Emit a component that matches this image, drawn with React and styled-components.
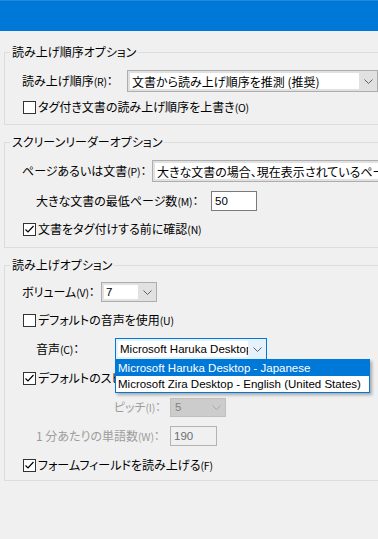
import styled, { createGlobalStyle } from "styled-components";

const GlobalStyle = createGlobalStyle`
  html, body {
    margin: 0;
    padding: 0;
    background: #f0f0f0;
  }
  body {
    font-family: "Noto Sans CJK JP", sans-serif;
    font-feature-settings: "palt";
    font-size: 12px;
    color: #000;
    overflow: hidden;
  }
`;

const latin = `"Liberation Sans", "Noto Sans CJK JP", sans-serif`;

const Page = styled.div`
  width: 378px;
  height: 539px;
  overflow: hidden;
  background: #f0f0f0;
`;

const TitleBar = styled.div`
  height: 31px;
  background: #0078d7;
  border-top: 1px solid #1f8ae0;
  box-sizing: border-box;
`;

const Group = styled.fieldset`
  width: 440px;
  margin: ${(p) => p.$top}px 0 0 4px;
  padding: 0;
  border: 1px solid #dcdcdc;
  box-sizing: border-box;
`;

const Legend = styled.legend`
  margin-left: 5px;
  padding: 0 2px;
  line-height: 16px;
  height: 16px;
`;

const Body = styled.div`
  padding: ${(p) => p.$pt}px 0 ${(p) => p.$pb}px 17px;
`;

const Row = styled.div`
  position: relative;
  display: flex;
  align-items: center;
  height: 22px;
  margin-top: ${(p) => p.$mt || 0}px;
  padding-left: ${(p) => (p.$indent ? 14 : 0)}px;
  white-space: nowrap;
`;

const Label = styled.div`
  width: ${(p) => p.$w}px;
  flex-shrink: 0;
  text-align: ${(p) => (p.$right ? "right" : "left")};
  padding-right: ${(p) => (p.$right ? 9 : 0)}px;
  box-sizing: border-box;
  color: ${(p) => (p.$disabled ? "#9d9d9d" : "#000")};
  line-height: 16px;
`;

const Key = styled.span`
  font-size: 10.5px;
  letter-spacing: -0.2px;
`;

const Combo = styled.div`
  position: relative;
  display: flex;
  width: ${(p) => p.$w}px;
  height: ${(p) => p.$h}px;
  box-sizing: border-box;
  flex-shrink: 0;
  border: 1px solid
    ${(p) => (p.$focused ? "#0078d7" : p.$disabled ? "#bfbfbf" : "#adadad")};
  background: ${(p) =>
    p.$focused ? "#e5f1fb" : p.$disabled ? "#cccccc" : "#e1e1e1"};
  padding: 2px 0 2px 2px;
`;

const Field = styled.div`
  flex: 1;
  background: ${(p) => (p.$disabled ? "transparent" : "#fff")};
  color: ${(p) => (p.$disabled ? "#838383" : "#000")};
  padding-left: 2px;
  display: flex;
  align-items: center;
  overflow: hidden;
  font-family: ${(p) => (p.$latin ? latin : "inherit")};
  font-size: ${(p) => (p.$latin ? "11.5px" : "12px")};
`;

const ArrowBox = styled.div`
  width: 18px;
  display: flex;
  align-items: center;
  justify-content: center;
  flex-shrink: 0;
`;

const TextBox = styled.div`
  width: ${(p) => p.$w}px;
  height: ${(p) => p.$h}px;
  box-sizing: border-box;
  border: 1px solid ${(p) => (p.$disabled ? "#b4b4b4" : "#7a7a7a")};
  background: ${(p) => (p.$disabled ? "#f0f0f0" : "#fff")};
  color: ${(p) => (p.$disabled ? "#6d6d6d" : "#000")};
  padding-left: 3px;
  display: flex;
  align-items: center;
  font-family: ${latin};
  font-size: 11.5px;
`;

const CheckRow = styled.label`
  display: flex;
  align-items: center;
  gap: 2px;
  margin-left: 1px;
  line-height: 16px;
`;

const Box = styled.span`
  width: 13px;
  height: 13px;
  box-sizing: border-box;
  border: 1px solid #333;
  background: #fff;
  display: flex;
  align-items: center;
  justify-content: center;
`;

const DropList = styled.div`
  position: absolute;
  top: 100%;
  left: -1px;
  width: 253px;
  border: 1px solid #0078d7;
  background: #fff;
  box-shadow: 2px 2px 3px rgba(0, 0, 0, 0.3);
  z-index: 5;
  font-family: ${latin};
  font-size: 11.5px;
`;

const Item = styled.div`
  height: 16px;
  line-height: 16px;
  padding-left: 2px;
  background: ${(p) => (p.$active ? "#0078d7" : "#fff")};
  color: ${(p) => (p.$active ? "#fff" : "#000")};
  white-space: nowrap;
`;

const Chevron = ({ color = "#606060" }) => (
  <svg width="9" height="5" viewBox="0 0 9 5">
    <polyline points="0.5,0.5 4.5,4.5 8.5,0.5" fill="none" stroke={color} strokeWidth="1" />
  </svg>
);

const Check = ({ checked, children }) => (
  <CheckRow>
    <Box>
      {checked && (
        <svg width="11" height="11" viewBox="0 0 11 11">
          <polyline points="1.5,5.5 4,8 9.5,2" fill="none" stroke="#000" strokeWidth="1.2" />
        </svg>
      )}
    </Box>
    <span>{children}</span>
  </CheckRow>
);

const Select = ({ w, h, value, focused, disabled, latin, children }) => (
  <Combo $w={w} $h={h} $focused={focused} $disabled={disabled}>
    <Field $disabled={disabled} $latin={latin}>{value}</Field>
    <ArrowBox>
      <Chevron color={disabled ? "#a8a8a8" : "#606060"} />
    </ArrowBox>
    {children}
  </Combo>
);

export default function App() {
  return (
    <Page>
      <GlobalStyle />
      <TitleBar />

      <Group $top={13}>
        <Legend>読み上げ順序オプション</Legend>
        <Body $pt={10} $pb={6}>
          <Row>
            <Label $w={105}>
              読み上げ順序<Key>(R)</Key>：
            </Label>
            <Select w={251} h={22} value="文書から読み上げ順序を推測 (推奨)" />
          </Row>
          <Row $mt={4}>
            <Check>
              タグ付き文書の読み上げ順序を上書き<Key>(O)</Key>
            </Check>
          </Row>
        </Body>
      </Group>

      <Group $top={9}>
        <Legend>スクリーンリーダーオプション</Legend>
        <Body $pt={10} $pb={7}>
          <Row>
            <Label $w={130}>
              ページあるいは文書<Key>(P)</Key>：
            </Label>
            <Select w={270} h={22} value="大きな文書の場合、現在表示されているページのみを読み上げ" />
          </Row>
          <Row $mt={8} $indent>
            <Label $w={175}>
              大きな文書の最低ページ数<Key>(M)</Key>：
            </Label>
            <TextBox $w={46} $h={20}>50</TextBox>
          </Row>
          <Row $mt={6}>
            <Check checked>
              文書をタグ付けする前に確認<Key>(N)</Key>
            </Check>
          </Row>
        </Body>
      </Group>

      <Group $top={9}>
        <Legend>読み上げオプション</Legend>
        <Body $pt={8} $pb={4}>
          <Row>
            <Label $w={79}>
              ボリューム<Key>(V)</Key>：
            </Label>
            <Select w={56} h={20} value="7" latin />
          </Row>
          <Row $mt={6}>
            <Check>
              デフォルトの音声を使用<Key>(U)</Key>
            </Check>
          </Row>
          <Row $mt={7} $indent>
            <Label $w={79}>
              音声<Key>(C)</Key>：
            </Label>
            <Select w={152} h={22} value="Microsoft Haruka Desktop - Japanese" focused latin>
              <DropList>
                <Item $active>Microsoft Haruka Desktop - Japanese</Item>
                <Item>Microsoft Zira Desktop - English (United States)</Item>
              </DropList>
            </Select>
          </Row>
          <Row $mt={7}>
            <Check checked>
              デフォルトのスピーチ属性を使用<Key>(S)</Key>
            </Check>
          </Row>
          <Row $mt={7} $indent>
            <Label $w={134} $right $disabled>
              ピッチ<Key>(I)</Key>：
            </Label>
            <Select w={56} h={19} value="5" disabled latin />
          </Row>
          <Row $mt={7} $indent>
            <Label $w={134} $disabled>
              1 分あたりの単語数<Key>(W)</Key>：
            </Label>
            <TextBox $w={47} $h={20} $disabled>190</TextBox>
          </Row>
          <Row $mt={7}>
            <Check checked>
              フォームフィールドを読み上げる<Key>(F)</Key>
            </Check>
          </Row>
        </Body>
      </Group>
    </Page>
  );
}
